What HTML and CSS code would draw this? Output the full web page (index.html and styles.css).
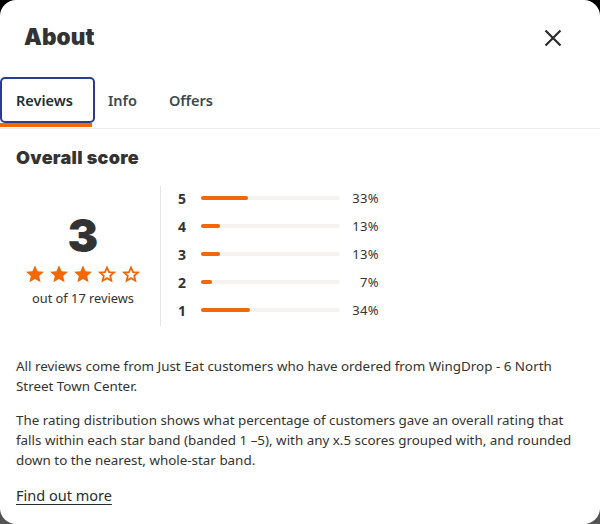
FILE: index.html
```html
<!DOCTYPE html>
<html>
<head>
<meta charset="utf-8">
<link rel="stylesheet" href="styles.css">
</head>
<body>
<div class="modal">
  <header class="head">
    <h1 class="title">About</h1>
    <button class="close" aria-label="Close">
      <svg width="18" height="18" viewBox="0 0 18 18"><path d="M1.5 1.5 L16.5 16.5 M16.5 1.5 L1.5 16.5" stroke="#2b2b2b" stroke-width="2.2" fill="none"/></svg>
    </button>
  </header>
  <nav class="tabs">
    <div class="tab active">Reviews</div>
    <div class="tab info">Info</div>
    <div class="tab">Offers</div>
  </nav>
  <section class="content">
    <h2 class="sub">Overall score</h2>
    <div class="score">
      <div class="summary">
        <div class="big">3</div>
        <div class="stars">
          <svg class="star" viewBox="0 0 24 24"><path d="M12 1.5l3.1 7.1 7.7.7-5.8 5.1 1.7 7.6L12 18l-6.7 4 1.7-7.6-5.8-5.1 7.7-.7z" fill="#f36805"/></svg>
          <svg class="star" viewBox="0 0 24 24"><path d="M12 1.5l3.1 7.1 7.7.7-5.8 5.1 1.7 7.6L12 18l-6.7 4 1.7-7.6-5.8-5.1 7.7-.7z" fill="#f36805"/></svg>
          <svg class="star" viewBox="0 0 24 24"><path d="M12 1.5l3.1 7.1 7.7.7-5.8 5.1 1.7 7.6L12 18l-6.7 4 1.7-7.6-5.8-5.1 7.7-.7z" fill="#f36805"/></svg>
          <svg class="star" viewBox="0 0 24 24"><path d="M12 4.2l2.4 5.5 6 .5-4.5 4 1.3 5.9L12 17l-5.2 3.1 1.3-5.9-4.5-4 6-.5z" fill="none" stroke="#f36805" stroke-width="2.2" stroke-linejoin="miter"/></svg>
          <svg class="star" viewBox="0 0 24 24"><path d="M12 4.2l2.4 5.5 6 .5-4.5 4 1.3 5.9L12 17l-5.2 3.1 1.3-5.9-4.5-4 6-.5z" fill="none" stroke="#f36805" stroke-width="2.2" stroke-linejoin="miter"/></svg>
        </div>
        <div class="count">out of 17 reviews</div>
      </div>
      <div class="dist">
        <div class="row"><span class="num">5</span><span class="track"><span class="fill" style="width:34%"></span></span><span class="pct">33%</span></div>
        <div class="row"><span class="num">4</span><span class="track"><span class="fill" style="width:14%"></span></span><span class="pct">13%</span></div>
        <div class="row"><span class="num">3</span><span class="track"><span class="fill" style="width:14%"></span></span><span class="pct">13%</span></div>
        <div class="row"><span class="num">2</span><span class="track"><span class="fill" style="width:8%"></span></span><span class="pct">7%</span></div>
        <div class="row"><span class="num">1</span><span class="track"><span class="fill" style="width:35%"></span></span><span class="pct">34%</span></div>
      </div>
    </div>
    <p class="text">All reviews come from Just Eat customers who have ordered from WingDrop - 6 North Street Town Center.</p>
    <p class="text">The rating distribution shows what percentage of customers gave an overall rating that falls within each star band (banded 1 –5), with any x.5 scores grouped with, and rounded down to the nearest, whole-star band.</p>
    <a class="more" href="#">Find out more</a>
  </section>
</div>
</body>
</html>
```
FILE: styles.css
```css
* { box-sizing: border-box; }
html, body { margin: 0; height: 100%; }
body {
  background: linear-gradient(#000 0%, #000 50%, #555 100%);
  font-family: "Noto Sans", "Liberation Sans", sans-serif;
  color: #242e30;
}
.modal {
  height: 524px;
  background: #fff;
  border-radius: 16px;
  overflow: hidden;
}
.head {
  display: flex;
  justify-content: space-between;
  padding: 22px 38px 0 24px;
  height: 76px;
  align-items: flex-start;
}
.title {
  margin: 0;
  font-family: Inter, sans-serif;
  font-weight: 900;
  font-size: 22.5px;
  line-height: 30px;
  color: #333;
  letter-spacing: 0.1px;
}
.close {
  border: 0;
  background: none;
  padding: 0;
  margin-top: 7px;
  width: 18px;
  height: 18px;
}
.tabs {
  display: flex;
  border-bottom: 1px solid #ebebeb;
  height: 53px;
}
.tab {
  padding: 0 16px;
  height: 46px;
  display: flex;
  align-items: center;
  font-size: 14.5px;
  font-weight: 600;
  color: #3c4a4f;
  margin-top: 1px;
}
.tab.info { padding-left: 13px; }
.tab.active {
  padding: 0 0 0 14px;
  width: 95px;
  border: 2px solid #2a3b94;
  border-radius: 5px;
  color: #242e30;
  position: relative;
}
.tab.active::after {
  content: "";
  position: absolute;
  left: -2px;
  width: 92px;
  bottom: -6px;
  height: 4px;
  background: #f36805;
}
.content { padding: 0 16px; }
.sub {
  margin: 19px 0 0;
  font-family: Inter, sans-serif;
  font-weight: 900;
  font-size: 18px;
  line-height: 20px;
  color: #333;
  letter-spacing: 0.3px;
}
.score {
  display: flex;
  margin-top: 18px;
}
.summary {
  width: 145px;
  display: flex;
  flex-direction: column;
  align-items: center;
  justify-content: center;
  border-right: 1px solid #e6e6e6;
  height: 140px;
  padding-right: 10px;
}
.big {
  font-family: Inter, sans-serif;
  font-weight: 900;
  font-size: 46px;
  line-height: 48px;
  color: #333;
  margin-top: 6px;
}
.stars { display: flex; gap: 4px; margin-top: 5px; }
.star { width: 20px; height: 20px; }
.count {
  font-size: 12.8px;
  color: #333;
  margin-top: 5px;
}
.dist {
  display: flex;
  flex-direction: column;
  padding-left: 17px;
  padding-top: 2px;
  gap: 8px;
}
.row {
  display: flex;
  align-items: center;
  height: 20px;
}
.num {
  width: 23px;
  font-weight: 700;
  font-size: 14px;
  color: #333;
}
.track {
  width: 139px;
  height: 4px;
  background: #f5f2ef;
  border-radius: 2px;
  display: block;
}
.fill {
  display: block;
  height: 4px;
  background: #f36805;
  border-radius: 2px;
}
.pct {
  width: 39px;
  text-align: right;
  font-size: 13px;
  color: #333;
  letter-spacing: 0.4px;
}
.text {
  font-size: 13.4px;
  line-height: 20px;
  margin: 30px 0 0;
  color: #333;
}
.text + .text { margin-top: 14px; }
.more {
  display: inline-block;
  margin-top: 15px;
  font-size: 14.5px;
  color: #242e30;
  text-decoration: underline;
  text-underline-offset: 3px;
}
```
